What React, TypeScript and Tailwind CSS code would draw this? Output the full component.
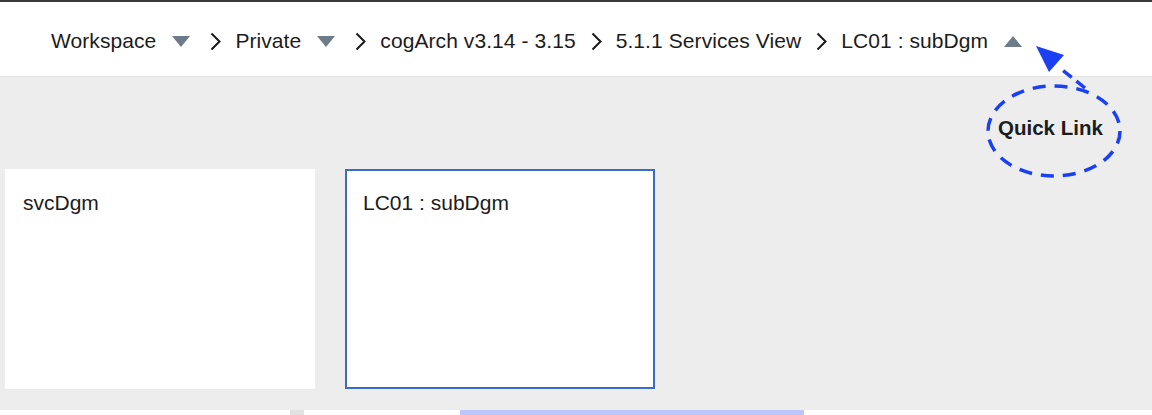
import React from "react";

const crumbs = [
  { label: "Workspace", caret: "down" },
  { label: "Private", caret: "down" },
  { label: "cogArch v3.14 - 3.15" },
  { label: "5.1.1 Services View" },
  { label: "LC01 : subDgm", caret: "up" },
];

function Caret({ dir }: { dir: string }) {
  return (
    <svg width="18" height="11" viewBox="0 0 18 11" className="ml-4 mr-[5px] shrink-0">
      {dir === "down" ? (
        <polygon points="0,0 18,0 9,11" fill="#6e7b89" />
      ) : (
        <polygon points="0,11 18,11 9,0" fill="#6e7b89" />
      )}
    </svg>
  );
}

function Chevron() {
  return (
    <svg width="11" height="19" viewBox="0 0 11 19" className="ml-[15px] mr-[14px] shrink-0">
      <polyline points="1.5,1.5 9.5,9.5 1.5,17.5" fill="none" stroke="#1a1a1a" strokeWidth="2" />
    </svg>
  );
}

function QuickLinkNote() {
  return (
    <div className="pointer-events-none absolute left-[980px] top-[40px] h-[145px] w-[150px]">
      <svg width="150" height="145" viewBox="0 0 150 145" className="absolute inset-0">
        <ellipse
          cx="74"
          cy="91"
          rx="66"
          ry="45"
          fill="none"
          stroke="#1b3ff2"
          strokeWidth="3.5"
          strokeDasharray="13 9"
        />
        <line x1="105" y1="48" x2="80" y2="28" stroke="#1b3ff2" strokeWidth="3.5" strokeDasharray="11 6" />
        <polygon points="56,6 84,15 69,32" fill="#1b3ff2" />
      </svg>
      <span className="absolute left-[18px] top-[73px] text-[20.5px] font-bold text-[#1c1c1c]">Quick Link</span>
    </div>
  );
}

export default function App() {
  return (
    <div className="relative h-[415px] w-[1152px] overflow-hidden bg-[#ededed] font-['Liberation_Sans',Arial,sans-serif]">
      <div className="h-[2px] bg-[#3a3a3a]" />
      <header className="flex h-[75px] items-center border-b border-[#e4e4e4] bg-white pl-[51px] pt-[4px] text-[21px] tracking-[0.08px] text-[#1c1c1c]">
        {crumbs.map((c, i) => (
          <div key={i} className="flex items-center">
            {i > 0 && <Chevron />}
            <span className="whitespace-nowrap">{c.label}</span>
            {c.caret && <Caret dir={c.caret} />}
          </div>
        ))}
      </header>

      <main className="flex h-[333px] gap-[30px] pl-[5px] pt-[92px]">
        <div className="h-[220px] w-[310px] bg-white pl-[18px] pt-[18px] text-[21px] text-[#1c1c1c]">svcDgm</div>
        <div className="h-[220px] w-[310px] border-2 border-[#3b6cc3] bg-white pl-[16px] pt-[16px] text-[21px] text-[#1c1c1c]">
          LC01 : subDgm
        </div>
      </main>

      <div className="flex h-[5px] bg-white">
        <div className="w-[290px]" />
        <div className="w-[14px] bg-[#e2e2e2]" />
        <div className="w-[156px]" />
        <div className="w-[344px] bg-[#bcc6fb]" />
      </div>

      <QuickLinkNote />
    </div>
  );
}
